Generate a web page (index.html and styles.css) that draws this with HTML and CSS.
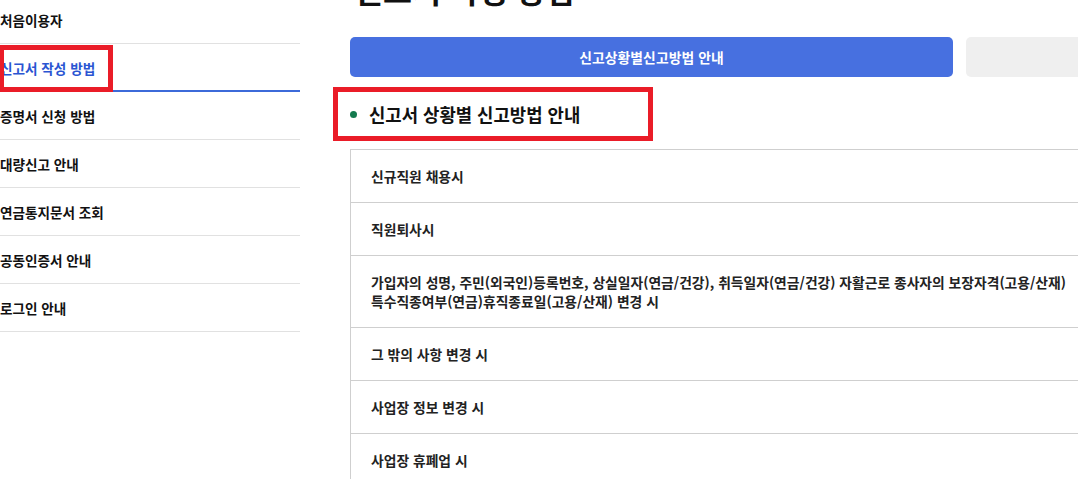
FILE: index.html
```html
<!DOCTYPE html>
<html lang="ko">
<head>
<meta charset="utf-8">
<title>신고서 작성 방법</title>
<link rel="stylesheet" href="styles.css">
</head>
<body>
<div class="layout">
  <nav class="sidebar">
    <ul class="side-menu">
      <li class="side-item"><a>처음이용자</a></li>
      <li class="side-item active"><a>신고서 작성 방법</a></li>
      <li class="side-item"><a>증명서 신청 방법</a></li>
      <li class="side-item"><a>대량신고 안내</a></li>
      <li class="side-item"><a>연금통지문서 조회</a></li>
      <li class="side-item"><a>공동인증서 안내</a></li>
      <li class="side-item"><a>로그인 안내</a></li>
    </ul>
  </nav>
  <main class="content">
    <h1 class="page-title">신고서 작성 방법</h1>
    <div class="tabs">
      <button class="tab active">신고상황별신고방법 안내</button>
      <button class="tab">신고서 작성 예시</button>
    </div>
    <h2 class="section-title"><span class="bullet"></span>신고서 상황별 신고방법 안내</h2>
    <ul class="case-list">
      <li class="case">신규직원 채용시</li>
      <li class="case">직원퇴사시</li>
      <li class="case">가입자의 성명, 주민(외국인)등록번호, 상실일자(연금/건강), 취득일자(연금/건강) 자활근로 종사자의 보장자격(고용/산재)<br>특수직종여부(연금)휴직종료일(고용/산재) 변경 시</li>
      <li class="case">그 밖의 사항 변경 시</li>
      <li class="case">사업장 정보 변경 시</li>
      <li class="case">사업장 휴폐업 시</li>
    </ul>
  </main>
</div>
<div class="mark mark-side"></div>
<div class="mark mark-title"></div>
</body>
</html>
```

FILE: styles.css
```css
* { box-sizing: border-box; }
html, body {
  margin: 0;
  padding: 0;
  background: #fff;
  overflow: hidden;
  height: 479px;
}
body {
  font-family: "Noto Sans CJK KR", "Noto Sans", sans-serif;
  color: #111;
  position: relative;
}
.layout {
  display: flex;
  gap: 50px;
  width: 1700px;
}
.sidebar {
  width: 300px;
  flex: none;
}
.side-menu {
  list-style: none;
  margin: -4px 0 0;
  padding: 0;
}
.side-item {
  height: 48px;
  display: flex;
  align-items: center;
  border-bottom: 1px solid #e1e1e1;
  font-size: 13.6px;
  font-weight: 700;
}
.side-item.active {
  color: #2a55d2;
  border-bottom: 2px solid #3c6ad9;
  padding-top: 1px;
}
.content {
  flex: none;
  width: 1219px;
}
.page-title {
  margin: -29px 0 0;
  font-size: 31.5px;
  line-height: 36px;
  font-weight: 700;
  padding-left: 4px;
}
.tabs {
  display: flex;
  gap: 13px;
  margin-top: 30px;
}
.tab {
  flex: none;
  width: 603px;
  height: 40px;
  border: none;
  border-radius: 5px;
  background: #efefef;
  color: #fff;
  font-family: inherit;
  font-size: 13.8px;
  font-weight: 700;
  letter-spacing: 0.1px;
}
.tab.active {
  background: #4770e0;
}
.tab:not(.active) { color: #333; }
.section-title {
  margin: 25px 0 0;
  display: flex;
  align-items: center;
  gap: 12px;
  font-size: 17.8px;
  line-height: 24px;
  font-weight: 700;
}
.bullet {
  width: 7px;
  height: 7px;
  border-radius: 50%;
  background: #137a4e;
  flex: none;
}
.case-list {
  list-style: none;
  margin: 23px 0 0;
  padding: 0;
  border-top: 1px solid #cfcfcf;
  border-left: 1px solid #cfcfcf;
}
.case {
  padding: 17px 20px 16px;
  line-height: 19px;
  font-size: 13.8px;
  font-weight: 700;
  color: #222;
  border-bottom: 1px solid #cfcfcf;
}
.mark {
  position: absolute;
  border: 5px solid #ea1c28;
  pointer-events: none;
}
.mark-side {
  left: -1px;
  top: 45px;
  width: 114px;
  height: 47px;
}
.mark-title {
  left: 333px;
  top: 87px;
  width: 320px;
  height: 54px;
}
```
